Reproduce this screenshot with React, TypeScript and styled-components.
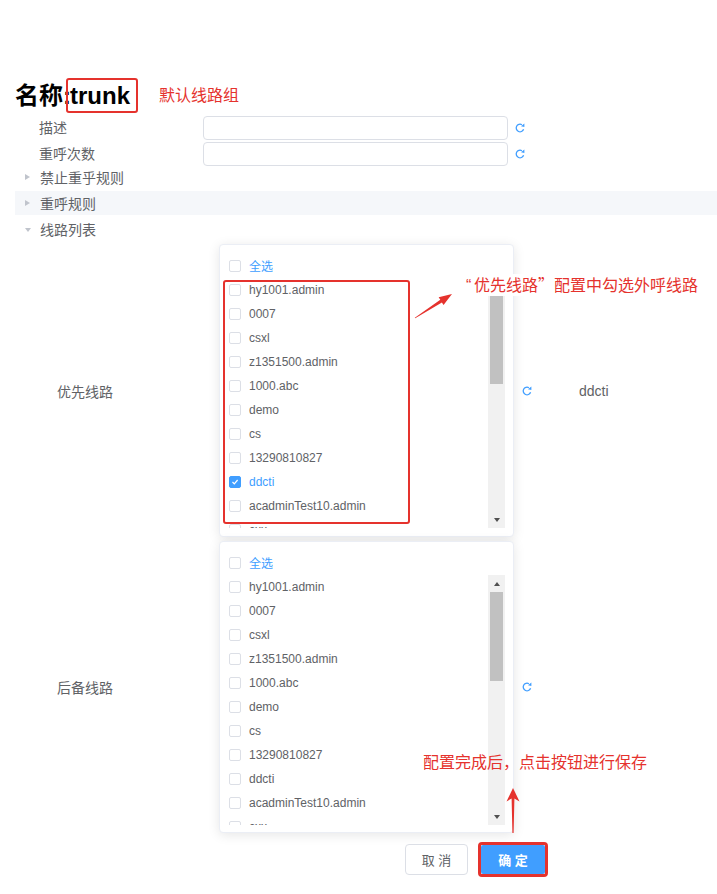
import React from 'react';
import styled, { createGlobalStyle } from 'styled-components';

const RED = '#e5322d';
const BLUE = '#409eff';

const GlobalStyle = createGlobalStyle`
  html, body { margin: 0; padding: 0; background: #fff; }
  body {
    font-family: "Liberation Sans", "Noto Sans CJK SC", sans-serif;
    color: #606266;
  }
  * { box-sizing: border-box; }
`;

const Page = styled.div`
  position: relative;
  width: 717px;
  height: 894px;
  padding: 78px 0 0 15px;
  overflow: hidden;
`;

const TitleRow = styled.div`
  display: flex;
  align-items: center;
  height: 35px;
`;

const TitleText = styled.h1`
  margin: 0;
  display: flex;
  align-items: center;
  font-size: 24px;
  font-weight: 700;
  color: #000;
  line-height: 35px;
`;

const Highlight = styled.span`
  display: inline-block;
  margin-left: -5px;
  padding: 0 6px 0 2px;
  border: 2px solid ${RED};
  border-radius: 3px;
  line-height: 31px;
`;

const Note = styled.span`
  margin-left: 21px;
  font-size: 16px;
  line-height: 20px;
  color: ${RED};
`;

const Fields = styled.div`
  display: flex;
  flex-direction: column;
  gap: 2px;
  margin-top: 3px;
`;

const FieldRow = styled.div`
  display: flex;
  align-items: center;
  height: 24px;
`;

const FieldLabel = styled.label`
  width: 188px;
  padding-left: 24px;
  font-size: 14px;
  line-height: 24px;
  color: #606266;
`;

const TextInput = styled.input`
  width: 305px;
  height: 24px;
  border: 1px solid #dcdfe6;
  border-radius: 4px;
  outline: none;
  background: #fff;
`;

const IconSlot = styled.span<{ $ml: number }>`
  display: inline-flex;
  margin-left: ${(p) => p.$ml}px;
  width: 10px;
  height: 10px;
`;

const Sections = styled.div`
  display: flex;
  flex-direction: column;
  gap: 2px;
  margin-top: -1px;
`;

const SectionHead = styled.div<{ $active?: boolean }>`
  display: flex;
  align-items: center;
  height: 24px;
  padding-left: 10px;
  gap: 9px;
  background: ${(p) => (p.$active ? '#f5f7fa' : 'transparent')};
  font-size: 14px;
  color: #606266;
`;

const Caret = styled.span<{ $open?: boolean }>`
  display: inline-block;
  width: 0;
  height: 0;
  ${(p) =>
    p.$open
      ? `border-top: 4px solid #c0c4cc; border-left: 3px solid transparent; border-right: 3px solid transparent; margin-top: 2px;`
      : `border-left: 5px solid #c0c4cc; border-top: 3px solid transparent; border-bottom: 3px solid transparent; margin-right: 1px;`}
`;

const Lists = styled.div`
  display: flex;
  flex-direction: column;
  gap: 4px;
  margin-top: 3px;
`;

const ListRow = styled.div`
  display: flex;
  align-items: center;
`;

const ListLabel = styled.div`
  width: 204px;
  padding-left: 42px;
  font-size: 14px;
  color: #606266;
`;

const Card = styled.div<{ $h: number }>`
  width: 295px;
  height: ${(p) => p.$h}px;
  padding: 8px 8px 9px 9px;
  border: 1px solid #ebeef5;
  border-radius: 4px;
  background: #fff;
  box-shadow: 0 2px 12px 0 rgba(0, 0, 0, 0.1);
  display: flex;
  flex-direction: column;
`;

const CheckRow = styled.div<{ $on?: boolean }>`
  display: flex;
  align-items: center;
  gap: 8px;
  height: 24px;
  flex-shrink: 0;
  font-size: 12px;
  color: ${(p) => (p.$on ? BLUE : '#606266')};
  white-space: nowrap;
`;

const HeadRow = styled(CheckRow)`
  height: 25px;
`;

const Box = styled.span<{ $on?: boolean }>`
  display: inline-flex;
  align-items: center;
  justify-content: center;
  width: 12px;
  height: 12px;
  border: 1px solid ${(p) => (p.$on ? BLUE : '#dcdfe6')};
  border-radius: 2px;
  background: ${(p) => (p.$on ? BLUE : '#fff')};
`;

const ListArea = styled.div`
  display: flex;
  height: 250px;
`;

const Items = styled.div`
  flex: 1;
  overflow: hidden;
  display: flex;
  flex-direction: column;
`;

const Track = styled.div`
  width: 17px;
  background: #f1f1f1;
  display: flex;
  flex-direction: column;
`;

const ScrollBtn = styled.div<{ $down?: boolean }>`
  height: 17px;
  display: flex;
  align-items: center;
  justify-content: center;
  &::after {
    content: '';
    width: 0;
    height: 0;
    border-left: 3.5px solid transparent;
    border-right: 3.5px solid transparent;
    ${(p) => (p.$down ? 'border-top: 4px solid #505050;' : 'border-bottom: 4px solid #505050;')}
  }
`;

const Thumb = styled.div`
  height: 89px;
  margin: 0 2px;
  background: #c1c1c1;
`;

const Spacer = styled.div`
  flex: 1;
`;

const Value = styled.span`
  margin-left: 47px;
  font-size: 14px;
  color: #606266;
`;

const Footer = styled.div`
  display: flex;
  align-items: center;
  gap: 10px;
  margin-top: 9px;
  padding-left: 390px;
`;

const CancelBtn = styled.button`
  width: 63px;
  height: 31px;
  border: 1px solid #dcdfe6;
  border-radius: 4px;
  background: #fff;
  color: #606266;
  font-family: inherit;
  font-size: 13px;
  padding: 0;
`;

const ConfirmFrame = styled.div`
  display: flex;
  border: 3px solid ${RED};
  border-radius: 4px;
`;

const ConfirmBtn = styled.button`
  width: 64px;
  height: 29px;
  border: none;
  border-radius: 2px;
  background: ${BLUE};
  color: #fff;
  font-family: inherit;
  font-size: 13px;
  font-weight: 700;
  padding: 0;
`;

const Mark = styled.div`
  position: absolute;
  left: 223px;
  top: 280px;
  width: 187px;
  height: 244px;
  border: 2px solid ${RED};
  border-radius: 3px;
  pointer-events: none;
`;

const Callout = styled.div<{ $x: number; $y: number; $bg?: boolean }>`
  position: absolute;
  left: ${(p) => p.$x}px;
  top: ${(p) => p.$y}px;
  font-family: "Noto Sans CJK SC", "Liberation Sans", sans-serif;
  font-size: 16px;
  line-height: 20px;
  color: ${RED};
  white-space: nowrap;
  background: ${(p) => (p.$bg ? '#fff' : 'transparent')};
`;

const OpenQuote = styled.span`
  font-family: "Liberation Sans", sans-serif;
  margin-right: 2.7px;
`;

const ArrowSvg = styled.svg<{ $x: number; $y: number }>`
  position: absolute;
  left: ${(p) => p.$x}px;
  top: ${(p) => p.$y}px;
  overflow: visible;
`;

const Refresh = ({ ml }: { ml: number }) => (
  <IconSlot $ml={ml}>
    <svg width="10" height="10" viewBox="0 0 10 10">
      <path
        d="M8.6 6.3 A3.8 3.8 0 1 1 6.9 1.7"
        fill="none"
        stroke={BLUE}
        strokeWidth="1.3"
      />
      <path d="M9.4 0.6 L9.4 4 L6 3.2 Z" fill={BLUE} />
    </svg>
  </IconSlot>
);

const Check = ({ on }: { on?: boolean }) => (
  <Box $on={on}>
    {on && (
      <svg width="8" height="8" viewBox="0 0 8 8">
        <path d="M1.5 4 L3.3 5.8 L6.6 2" fill="none" stroke="#fff" strokeWidth="1.2" />
      </svg>
    )}
  </Box>
);

const ITEMS = [
  'hy1001.admin',
  '0007',
  'csxl',
  'z1351500.admin',
  '1000.abc',
  'demo',
  'cs',
  '13290810827',
  'ddcti',
  'acadminTest10.admin',
  'cxx',
];

const PickList = ({ height, checked }: { height: number; checked?: string }) => (
  <Card $h={height}>
    <HeadRow $on>
      <Check />
      全选
    </HeadRow>
    <ListArea>
      <Items>
        {ITEMS.map((it) => (
          <CheckRow key={it} $on={it === checked}>
            <Check on={it === checked} />
            {it}
          </CheckRow>
        ))}
      </Items>
      <Track>
        <ScrollBtn />
        <Thumb />
        <Spacer />
        <ScrollBtn $down />
      </Track>
    </ListArea>
  </Card>
);

export default function App() {
  return (
    <>
      <GlobalStyle />
      <Page>
        <TitleRow>
          <TitleText>
            名称:<Highlight>trunk</Highlight>
          </TitleText>
          <Note>默认线路组</Note>
        </TitleRow>

        <Fields>
          <FieldRow>
            <FieldLabel>描述</FieldLabel>
            <TextInput />
            <Refresh ml={7} />
          </FieldRow>
          <FieldRow>
            <FieldLabel>重呼次数</FieldLabel>
            <TextInput />
            <Refresh ml={7} />
          </FieldRow>
        </Fields>

        <Sections>
          <SectionHead>
            <Caret />
            禁止重乎规则
          </SectionHead>
          <SectionHead $active>
            <Caret />
            重呼规则
          </SectionHead>
          <SectionHead>
            <Caret $open />
            线路列表
          </SectionHead>
        </Sections>

        <Lists>
          <ListRow>
            <ListLabel>优先线路</ListLabel>
            <PickList height={293} checked="ddcti" />
            <Refresh ml={8} />
            <Value>ddcti</Value>
          </ListRow>
          <ListRow>
            <ListLabel>后备线路</ListLabel>
            <PickList height={292} />
            <Refresh ml={8} />
          </ListRow>
        </Lists>

        <Footer>
          <CancelBtn>取 消</CancelBtn>
          <ConfirmFrame>
            <ConfirmBtn>确 定</ConfirmBtn>
          </ConfirmFrame>
        </Footer>

        <Mark />
        <Callout $x={466} $y={274} $bg>
          <OpenQuote>“</OpenQuote>优先线路”配置中勾选外呼线路
        </Callout>
        <ArrowSvg $x={410} $y={286} width="56" height="36" viewBox="0 0 56 36">
          <polygon
            points="4.8,31.7 30.3,13.8 28.65,11.32 42,8 33.55,18.88 31.9,16.4 5.2,32.3"
            fill={RED}
          />
        </ArrowSvg>
        <Callout $x={423} $y={751}>
          配置完成后，点击按钮进行保存
        </Callout>
        <ArrowSvg $x={504} $y={786} width="18" height="50" viewBox="0 0 18 50">
          <polygon
            points="9,2 15.5,15.5 10.4,12.5 9.6,47 8.4,47 7.6,12.5 2.5,15.5"
            fill={RED}
          />
        </ArrowSvg>
      </Page>
    </>
  );
}
